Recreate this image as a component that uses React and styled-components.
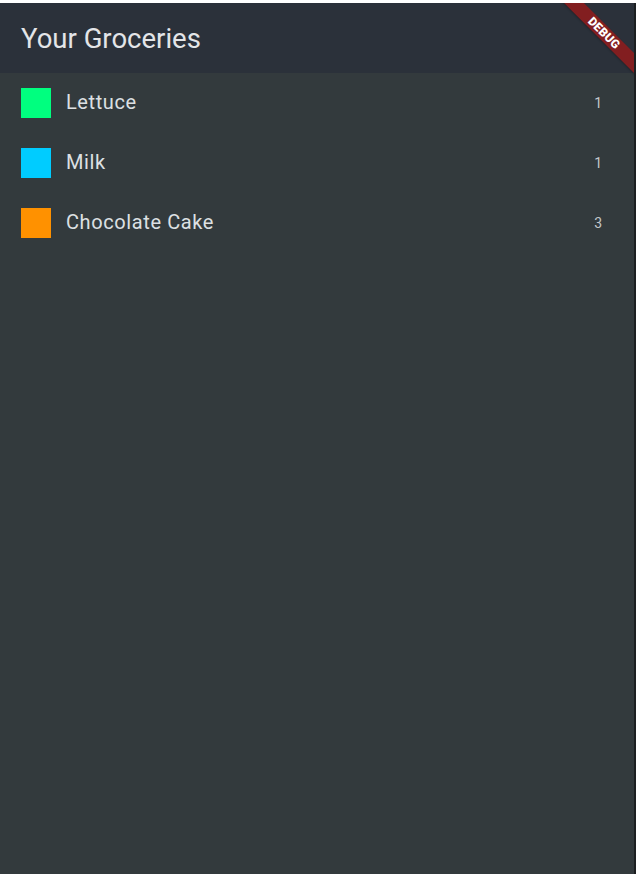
import React from "react";
import styled, { createGlobalStyle } from "styled-components";

const Global = createGlobalStyle`
  html, body { margin: 0; padding: 0; background: #ffffff; }
  body { font-family: Roboto, "Noto Sans", sans-serif; }
  * { box-sizing: border-box; }
`;

const Screen = styled.div`
  position: relative;
  height: 874px;
  display: flex;
  flex-direction: column;
  padding-top: 3px;
  background: #ffffff;
  overflow: hidden;
`;

const Frame = styled.div`
  flex: 1;
  display: flex;
  flex-direction: column;
  background: #333a3d;
  border-right: 2px solid #1c1f21;
`;

const AppBar = styled.header`
  height: 70px;
  display: flex;
  align-items: center;
  padding: 0 21px;
  background: #2b313a;
`;

const Title = styled.h1`
  margin: 0;
  font-family: Roboto, sans-serif;
  font-weight: 400;
  font-size: 27.5px;
  line-height: 1.2;
  color: #e3e5e8;
  letter-spacing: 0;
`;

const List = styled.ul`
  list-style: none;
  margin: 0;
  padding: 0;
`;

const Row = styled.li`
  height: 60px;
  display: flex;
  align-items: center;
  padding: 0 32px 0 21px;
`;

const Swatch = styled.span`
  width: 30px;
  height: 30px;
  flex: none;
  background: ${(p) => p.$color};
  margin-right: 15px;
`;

const Name = styled.span`
  flex: 1;
  font-size: 20px;
  line-height: 24px;
  margin-bottom: 3px;
  color: #dde0e3;
  letter-spacing: 0.6px;
`;

const Count = styled.span`
  font-size: 14px;
  line-height: 16px;
  margin-bottom: 1px;
  color: #c3c7ca;
`;

const BannerCorner = styled.div`
  position: absolute;
  top: 3px;
  right: 2px;
  width: 80px;
  height: 80px;
  overflow: hidden;
  pointer-events: none;
`;

const Banner = styled.div`
  position: absolute;
  left: -10px;
  top: 23px;
  width: 120px;
  height: 14px;
  transform: rotate(45deg);
  background: rgba(160, 24, 24, 0.75);
  box-shadow: 0 1px 2px rgba(0, 0, 0, 0.25);
  display: flex;
  align-items: center;
  justify-content: center;
  font-family: Roboto, sans-serif;
  font-weight: 900;
  font-size: 12px;
  line-height: 1;
  color: #ffffff;
  letter-spacing: 0.2px;
`;

const items = [
  { name: "Lettuce", color: "#00ff7f", count: 1 },
  { name: "Milk", color: "#00ccff", count: 1 },
  { name: "Chocolate Cake", color: "#ff9100", count: 3 },
];

export default function App() {
  return (
    <>
      <Global />
      <Screen>
        <Frame>
          <AppBar>
            <Title>Your Groceries</Title>
          </AppBar>
          <List>
            {items.map((it) => (
              <Row key={it.name}>
                <Swatch $color={it.color} />
                <Name>{it.name}</Name>
                <Count>{it.count}</Count>
              </Row>
            ))}
          </List>
        </Frame>
        <BannerCorner>
          <Banner>DEBUG</Banner>
        </BannerCorner>
      </Screen>
    </>
  );
}
